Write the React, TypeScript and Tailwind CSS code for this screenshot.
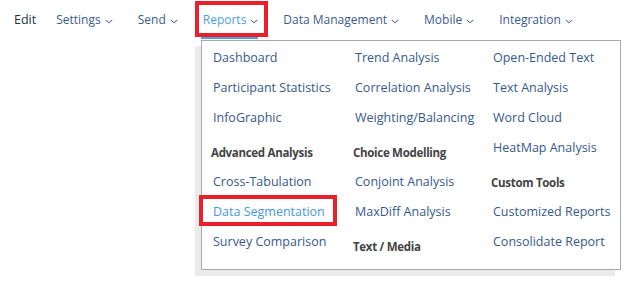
// Survey tool top nav with the Reports mega-menu open.
import * as React from "react";

const NAV = ["Settings", "Send", "Reports", "Data Management", "Mobile", "Integration"];

type Entry = { label: string; header?: boolean; active?: boolean };

const COLUMNS: Entry[][] = [
  [
    { label: "Dashboard" },
    { label: "Participant Statistics" },
    { label: "InfoGraphic" },
    { label: "Advanced Analysis", header: true },
    { label: "Cross-Tabulation" },
    { label: "Data Segmentation", active: true },
    { label: "Survey Comparison" },
  ],
  [
    { label: "Trend Analysis" },
    { label: "Correlation Analysis" },
    { label: "Weighting/Balancing" },
    { label: "Choice Modelling", header: true },
    { label: "Conjoint Analysis" },
    { label: "MaxDiff Analysis" },
    { label: "Text / Media", header: true },
  ],
  [
    { label: "Open-Ended Text" },
    { label: "Text Analysis" },
    { label: "Word Cloud" },
    { label: "HeatMap Analysis" },
    { label: "Custom Tools", header: true },
    { label: "Customized Reports" },
    { label: "Consolidate Report" },
  ],
];

function Chevron() {
  return (
    <svg width="8" height="5" viewBox="0 0 8 5" className="ml-[4px] mt-[2px]">
      <path d="M0.8 0.8 L4 3.8 L7.2 0.8" fill="none" stroke="#6b7c93" strokeWidth="1.1" />
    </svg>
  );
}

export default function App() {
  return (
    <div
      className="relative h-[283px] w-[626px] overflow-hidden bg-white"
      style={{ fontFamily: '"Open Sans", "Noto Sans", sans-serif' }}
    >
      <nav className="flex h-[39px] items-center gap-[25px] pl-[14px] pt-[1px] text-[12px]">
        <span className="mr-[-5px] text-[12.5px] font-medium text-[#1e3346]">Edit</span>
        {NAV.map((label) => (
          <span
            key={label}
            className={
              "flex items-center " + (label === "Reports" ? "text-[#4a9fe6]" : "text-[#3a5b92]")
            }
          >
            {label}
            <Chevron />
          </span>
        ))}
      </nav>

      {/* active tab underline */}
      <div className="absolute left-[201px] top-[37px] h-[2px] w-[57px] bg-[#4a9fe6]" />

      {/* dropdown */}
      <div className="absolute left-[201px] top-[40px] h-[230px] w-[420px] border border-[#aaaaaa] bg-white pl-[11px] pt-[2px] text-[12.5px] shadow-[-6px_6px_0_#ebebeb]">
        <div className="grid grid-cols-[142px_138px_1fr]">
          {COLUMNS.map((col, i) => (
            <div key={i} className="flex flex-col">
              {col.map((e) =>
                e.header ? (
                  <div
                    key={e.label}
                    className="-ml-[2px] h-[34px] whitespace-nowrap pt-[11px] text-[11.5px] font-bold leading-[18px] tracking-[-0.3px] text-[#444444]"
                  >
                    {e.label}
                  </div>
                ) : (
                  <div
                    key={e.label}
                    className={
                      "flex h-[30px] items-center whitespace-nowrap " +
                      (e.active ? "text-[#4597de]" : "text-[#35598f]")
                    }
                  >
                    {e.label}
                  </div>
                ),
              )}
            </div>
          ))}
        </div>
      </div>

      {/* annotation boxes */}
      <div className="absolute left-[195px] top-[1px] h-[36px] w-[73px] border-4 border-[#e8202a]" />
      <div className="absolute left-[199px] top-[195px] h-[31px] w-[138px] border-4 border-[#e8202a]" />
    </div>
  );
}
